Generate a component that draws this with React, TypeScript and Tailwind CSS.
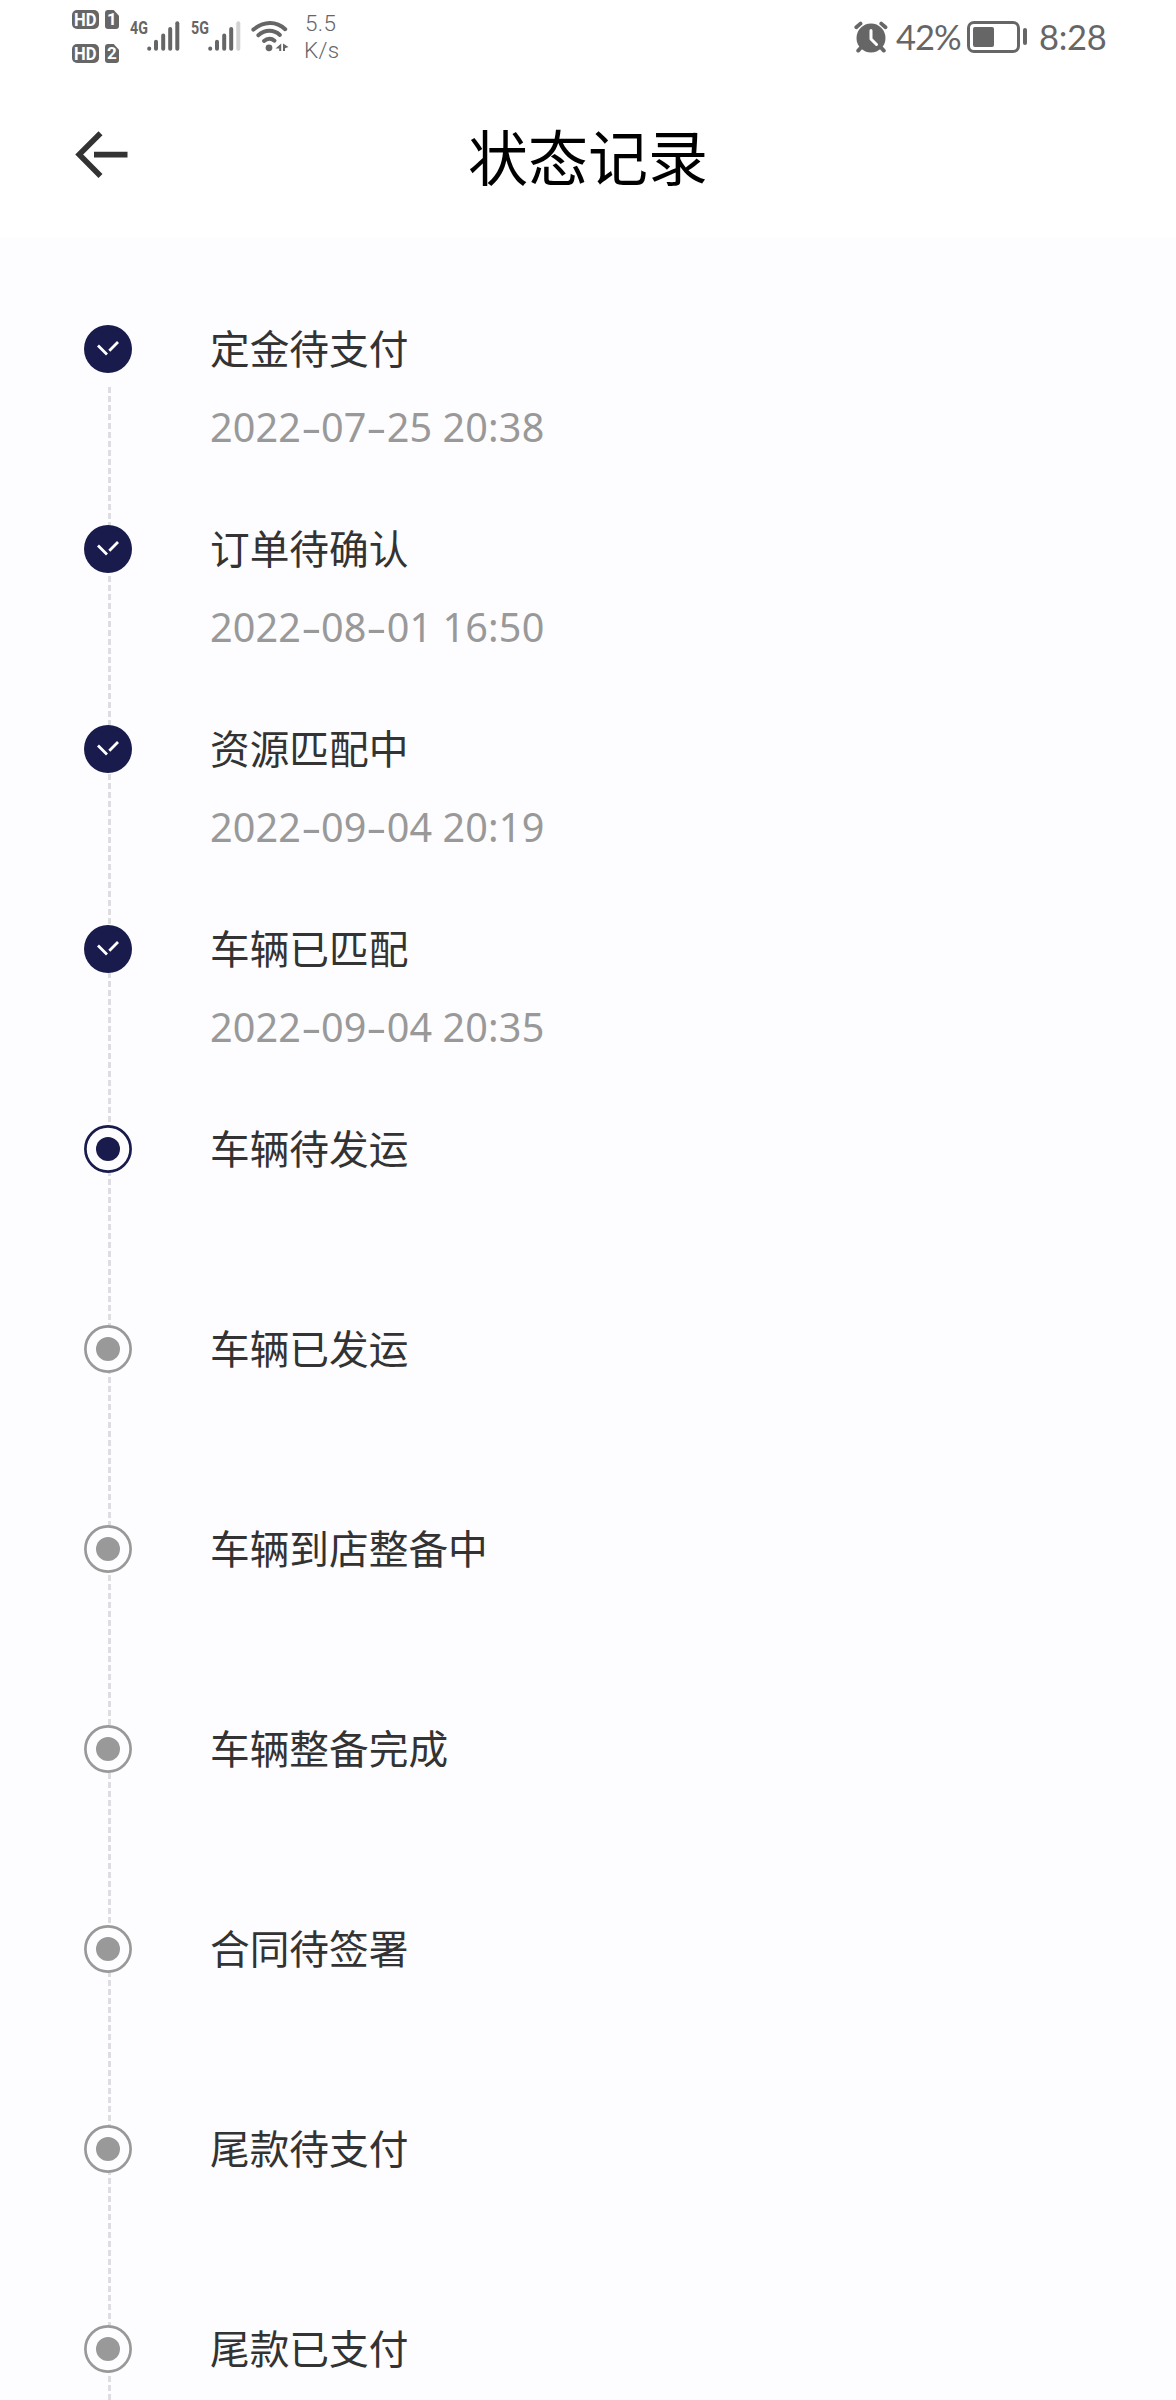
import React from "react";

type State = "done" | "current" | "pending";

const steps: { title: string; time?: string; state: State }[] = [
  { title: "定金待支付", time: "2022-07-25 20:38", state: "done" },
  { title: "订单待确认", time: "2022-08-01 16:50", state: "done" },
  { title: "资源匹配中", time: "2022-09-04 20:19", state: "done" },
  { title: "车辆已匹配", time: "2022-09-04 20:35", state: "done" },
  { title: "车辆待发运", state: "current" },
  { title: "车辆已发运", state: "pending" },
  { title: "车辆到店整备中", state: "pending" },
  { title: "车辆整备完成", state: "pending" },
  { title: "合同待签署", state: "pending" },
  { title: "尾款待支付", state: "pending" },
  { title: "尾款已支付", state: "pending" },
];

function SimBadge({ n }: { n: string }) {
  return (
    <div className="flex h-[19px] gap-[6px] font-['Roboto',sans-serif] text-[17px] font-bold leading-[19px] text-white">
      <span className="flex w-[27px] items-center justify-center rounded-[5px] bg-[#666]">
        <span className="scale-x-[0.92] text-[18px]">HD</span>
      </span>
      <span className="flex w-[14px] items-center justify-center rounded-[3px] bg-[#666] [clip-path:polygon(0_0,62%_0,100%_30%,100%_100%,0_100%)]">
        {n}
      </span>
    </div>
  );
}

function Signal({ dim }: { dim?: boolean }) {
  return (
    <svg width="34" height="32" viewBox="0 0 34 32" stroke="#666" strokeWidth="4" strokeLinecap="round">
      <path d="M2.2 28.4v.4M9 21.8v7M16.2 15.5v13.3M23.2 9v19.8" />
      <path d="M30.3 3.2v25.6" stroke={dim ? "#d2d2d2" : "#666"} />
    </svg>
  );
}

function Wifi() {
  return (
    <svg width="39" height="33" viewBox="0 0 39 33" fill="none" stroke="#666" strokeWidth="4" strokeLinecap="round">
      <path d="M2.4 9.600C12.500.8 25.500.8 34.200 9.200" />
      <path d="M7.300 15.300c6.900-5.900 15.400-5.900 21.600-.4" />
      <path d="M13 21c3.300-2.900 7.500-2.900 10.500-.3" />
      <circle cx="18" cy="27.800" r="3.400" fill="#666" stroke="none" />
      <path d="M30.200 23.500v7.500h-2v-2.500H24.500zM32 23.500l5.500 3.500-3.500 1.300v2.700h-2z" fill="#666" stroke="none" />
    </svg>
  );
}

function Alarm() {
  return (
    <svg width="34" height="32" viewBox="0 0 34 32" fill="none" stroke="#666" strokeLinecap="round">
      <circle cx="17" cy="17" r="14.500" fill="#666" stroke="none" />
      <path d="M2.300 6.200 6.500 2.600M31.500 6.200 27.300 2.600" strokeWidth="3.800" />
      <path d="m7.500 26-3.300 3.600M26.500 26l3.300 3.600" strokeWidth="3.800" />
      <path d="M17 9.500v8.500l5.500 5.500" stroke="#fff" strokeWidth="3" strokeLinejoin="round" />
    </svg>
  );
}

function Battery() {
  return (
    <div className="flex items-center gap-[3px]">
      <div className="h-[32px] w-[53px] rounded-[7px] border-[3px] border-[#666] p-[3px]">
        <div className="h-full w-[21px] rounded-[2px] bg-[#666]" />
      </div>
      <div className="h-[17px] w-[4px] rounded-[2px] bg-[#666]" />
    </div>
  );
}

function StatusBar() {
  return (
    <div className="flex h-[74px] justify-between pl-[72px] pr-[72px] text-[#666]">
      <div className="flex">
        <div className="flex flex-col gap-[15px] pt-[10px]">
          <SimBadge n="1" />
          <SimBadge n="2" />
        </div>
        <div className="ml-[11px] flex pt-[20px]">
          <span className="w-[17px] origin-left scale-x-[0.75] font-['Roboto',sans-serif] text-[19px] font-bold leading-[16px]">4G</span>
          <Signal />
        </div>
        <div className="ml-[10px] flex pt-[20px]">
          <span className="w-[17px] origin-left scale-x-[0.75] font-['Roboto',sans-serif] text-[19px] font-bold leading-[16px]">5G</span>
          <Signal dim />
        </div>
        <div className="ml-[9px] pt-[20px]">
          <Wifi />
        </div>
        <div className="ml-[14px] pt-[10px] font-['Roboto',sans-serif] text-[22.500px] font-light leading-[27px] tracking-[0.3px]">
          <div className="pl-px">5.5</div>
          <div>K/s</div>
        </div>
      </div>
      <div className="flex h-[73px] items-center font-['Lato',sans-serif] text-[34.500px] leading-[40px]">
        <Alarm />
        <span className="ml-[8px] w-[64px] whitespace-nowrap tracking-[-1px]">42%</span>
        <div className="ml-[7px]">
          <Battery />
        </div>
        <span className="ml-[12px] w-[65px] whitespace-nowrap tracking-[-0.3px]">8:28</span>
      </div>
    </div>
  );
}

function Marker({ state }: { state: State }) {
  if (state === "done") {
    return (
      <svg className="relative shrink-0" width="48" height="48" viewBox="0 0 48 48" fill="none">
        <circle cx="24" cy="24" r="24" fill="#181b4b" />
        <path d="m14 20.500 9 9M25.300 25.800l8.700-8.700" stroke="#fff" strokeWidth="2.800" />
      </svg>
    );
  }
  const color = state === "current" ? "#181b4b" : "#999";
  return (
    <svg className="relative shrink-0" width="48" height="48" viewBox="0 0 48 48">
      <circle cx="24" cy="24" r="22.600" fill="#fdfdff" stroke={color} strokeWidth="2.700" />
      <circle cx="24" cy="24" r="12" fill={color} />
    </svg>
  );
}

function DateText({ value }: { value: string }) {
  return (
    <span className="whitespace-pre tracking-[0.13px]">
      {value.split(/(-)/).map((part, i) =>
        part === "-" ? (
          <span key={i} className="inline-block w-[20px] text-center">
            <span className="inline-block scale-x-[1.6]">-</span>
          </span>
        ) : (
          <span key={i}>{part}</span>
        ),
      )}
    </span>
  );
}

export default function App() {
  return (
    <div className="h-[2400px] w-[1176px] overflow-hidden bg-[#fdfdff] font-['Noto_Sans_CJK_SC',sans-serif]">
      <header className="h-[237px] bg-white">
        <StatusBar />
        <div className="grid h-[163px] grid-cols-[1fr_auto_1fr] items-start">
          <svg className="ml-[75px] mt-[57px]" width="54" height="48" viewBox="0 0 54 48" fill="none" stroke="#333" strokeWidth="5.600">
            <path d="M25.500 2.200 4.200 23.600l21.300 21.300M19 23.600h33.500" />
          </svg>
          <h1 className="mt-[36px] text-[60px] leading-[90px] text-black">状态记录</h1>
        </div>
      </header>
      <main className="relative">
        <div className="absolute left-[108px] top-[150px] h-[2013px] w-[3px] bg-[repeating-linear-gradient(to_bottom,#dedee2_0px,#dedee2_6px,transparent_6px,transparent_9px)]" />
        <ol className="pl-[84px] pt-[88px]">
          {steps.map((s) => (
            <li key={s.title} className="flex h-[200.040px] gap-[78px]">
              <Marker state={s.state} />
              <div>
                <div className="h-[48px] text-[39.700px] leading-[44px] text-[#333]">{s.title}</div>
                {s.time && (
                  <div className="mt-[29px] font-['Noto_Sans',sans-serif] text-[39.600px] leading-[50px] text-[#999]">
                    <DateText value={s.time} />
                  </div>
                )}
              </div>
            </li>
          ))}
        </ol>
      </main>
    </div>
  );
}
